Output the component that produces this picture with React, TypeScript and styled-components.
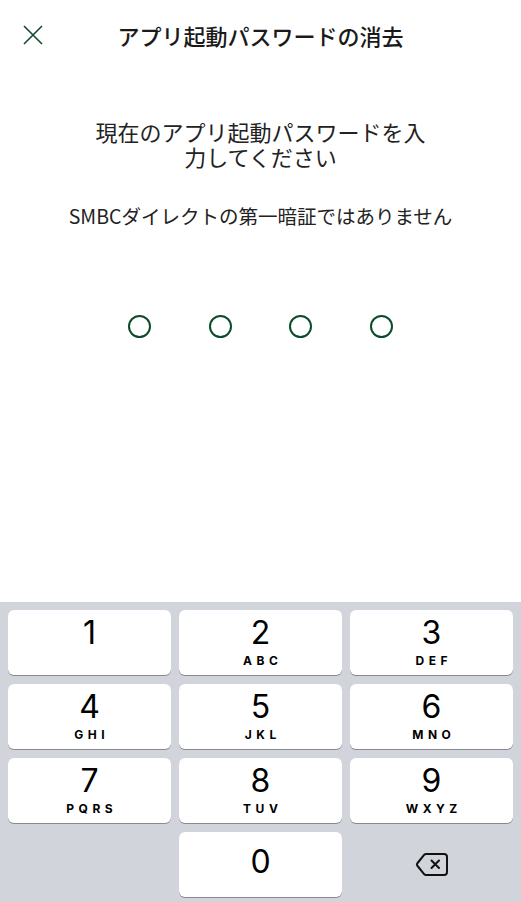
import React from 'react';
import styled, { createGlobalStyle } from 'styled-components';

const GlobalStyle = createGlobalStyle`
  html, body {
    margin: 0;
    padding: 0;
    background: #ffffff;
  }
  body {
    font-family: "Noto Sans CJK JP", "Inter", sans-serif;
    -webkit-font-smoothing: antialiased;
  }
`;

const keys = [
  { digit: '1', letters: '' },
  { digit: '2', letters: 'ABC' },
  { digit: '3', letters: 'DEF' },
  { digit: '4', letters: 'GHI' },
  { digit: '5', letters: 'JKL' },
  { digit: '6', letters: 'MNO' },
  { digit: '7', letters: 'PQRS' },
  { digit: '8', letters: 'TUV' },
  { digit: '9', letters: 'WXYZ' },
];

export default function App() {
  return (
    <>
      <GlobalStyle />
      <Screen>
        <Header>
          <CloseButton aria-label="閉じる">
            <svg width="20" height="20" viewBox="0 0 20 20">
              <path d="M1 1 L19 19 M19 1 L1 19" stroke="#0e4b2d" strokeWidth="1.6" fill="none" />
            </svg>
          </CloseButton>
          <Title>アプリ起動パスワードの消去</Title>
          <span />
        </Header>

        <Body>
          <Message>現在のアプリ起動パスワードを入力してください</Message>
          <Note>SMBCダイレクトの第一暗証ではありません</Note>
          <Dots>
            {[0, 1, 2, 3].map((i) => (
              <Dot key={i} />
            ))}
          </Dots>
        </Body>

        <Keypad>
          {keys.map((k) => (
            <Key key={k.digit}>
              <Digit>{k.digit}</Digit>
              <Letters>{k.letters}</Letters>
            </Key>
          ))}
          <span />
          <Key $single>
            <Digit $single>0</Digit>
          </Key>
          <DeleteKey aria-label="削除">
            <svg width="34" height="25" viewBox="0 0 34 25">
              <path
                d="M11 2 H29 Q32 2 32 5 V20 Q32 23 29 23 H11 Q10 23 9.3 22.3 L2.2 13.5 Q1.5 12.5 2.2 11.5 L9.3 2.7 Q10 2 11 2 Z"
                fill="none"
                stroke="#111"
                strokeWidth="2"
                strokeLinejoin="round"
              />
              <path d="M16.5 8.5 L24 16 M24 8.5 L16.5 16" stroke="#111" strokeWidth="2" strokeLinecap="round" />
            </svg>
          </DeleteKey>
        </Keypad>
      </Screen>
    </>
  );
}

const Screen = styled.div`
  display: flex;
  flex-direction: column;
  width: 521px;
  height: 902px;
  overflow: hidden;
  background: #ffffff;
`;

const Header = styled.header`
  display: grid;
  grid-template-columns: 66px 1fr 66px;
  align-items: center;
  height: 70px;
`;

const CloseButton = styled.button`
  display: flex;
  align-items: center;
  justify-content: center;
  width: 20px;
  height: 20px;
  margin-left: 23px;
  padding: 0;
  border: none;
  background: none;
`;

const Title = styled.h1`
  margin: 0;
  text-align: center;
  font-size: 22px;
  font-weight: 500;
  color: #1a1a1a;
`;

const Body = styled.main`
  flex: 1;
  display: flex;
  flex-direction: column;
  align-items: center;
`;

const Message = styled.p`
  width: 340px;
  margin: 49px 0 0;
  text-align: center;
  font-size: 22px;
  line-height: 25px;
  color: #222;
`;

const Note = styled.p`
  margin: 34px 0 0;
  text-align: center;
  font-size: 19.5px;
  line-height: 25px;
  color: #222;
`;

const Dots = styled.div`
  display: flex;
  gap: 57.5px;
  margin-top: 87px;
`;

const Dot = styled.span`
  box-sizing: border-box;
  width: 23px;
  height: 23px;
  border: 2px solid #0c4a2b;
  border-radius: 50%;
`;

const Keypad = styled.section`
  display: grid;
  grid-template-columns: repeat(3, 1fr);
  grid-auto-rows: 65px;
  column-gap: 8px;
  row-gap: 9px;
  height: 300px;
  box-sizing: border-box;
  padding: 8px 8px 0;
  background: #d1d4da;
`;

const Key = styled.div<{ $single?: boolean }>`
  display: flex;
  flex-direction: column;
  align-items: center;
  justify-content: ${(p) => (p.$single ? 'center' : 'flex-start')};
  background: #ffffff;
  border-radius: 6px;
  box-shadow: 0 1px 0 #898a8e;
  color: #000;
  font-family: "Inter", "Liberation Sans", sans-serif;
`;

const Digit = styled.span<{ $single?: boolean }>`
  margin: ${(p) => (p.$single ? '0 0 5px' : '4.5px 0 0')};
  font-size: 32px;
  font-weight: 400;
  line-height: 36px;
`;

const Letters = styled.span`
  margin-top: 4.5px;
  height: 12px;
  padding-left: 4.5px;
  font-size: 12px;
  font-weight: 700;
  line-height: 12px;
  letter-spacing: 4.5px;
`;

const DeleteKey = styled.button`
  display: flex;
  align-items: center;
  justify-content: center;
  padding: 0;
  border: none;
  background: none;
`;
